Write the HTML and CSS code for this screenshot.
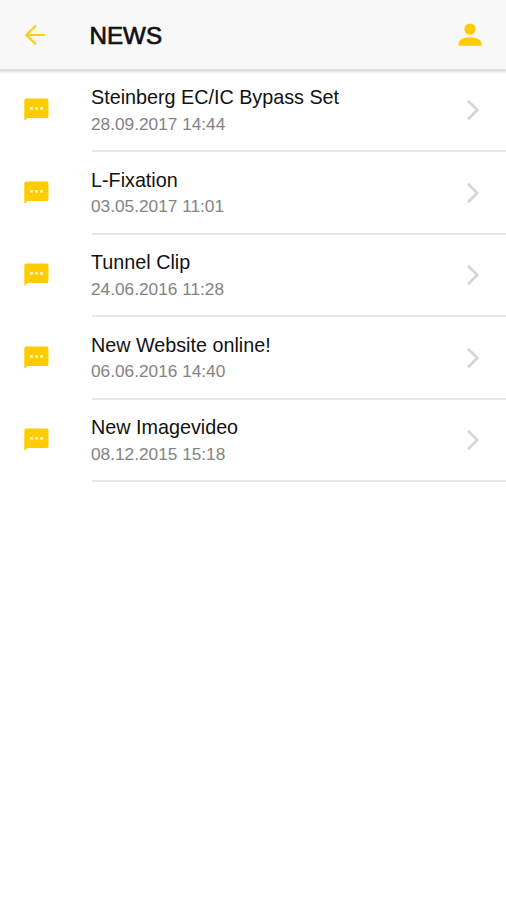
FILE: index.html
```html
<!DOCTYPE html>
<html lang="en">
<head>
<meta charset="utf-8">
<title>News</title>
<link rel="stylesheet" href="styles.css">
</head>
<body>
<svg width="0" height="0" class="symbols" aria-hidden="true">
  <symbol id="message" viewBox="0 0 25 24">
    <path fill="#fc0" d="M2 0.5H22.6Q24.5 0.5 24.5 2.4V18Q24.5 20 22.6 20H3.6L0.3 22.8V2.4Q0.3 0.5 2 0.5Z"/>
    <path fill="#fff3b8" d="M6 8.9h3v2.8H6zM11 8.9h3v2.8h-3zM16 8.9h3v2.8h-3z"/>
  </symbol>
  <symbol id="chevron" viewBox="0 0 14 22">
    <path fill="none" stroke="#d6d6d8" stroke-width="2.8" d="M2 1.8L11.2 11L2 20.2"/>
  </symbol>
</svg>
<header class="bar">
  <svg class="back" viewBox="0 0 22 22"><path d="M11.3 2.2L2.4 11L11.3 19.8M2.4 11H20"/></svg>
  <h1 class="title">NEWS</h1>
  <svg class="user" viewBox="0 0 24 24"><circle cx="12" cy="6.2" r="5.6"/><path d="M.6 22.8V20.2C.6 16.2 7 14.2 12 14.2S23.4 16.2 23.4 20.2V22.8Z"/></svg>
</header>
<main class="list">
  <article class="row"><svg class="message"><use href="#message"/></svg><div class="content"><div><h2 class="name">Steinberg EC/IC Bypass Set</h2><time class="date">28.09.2017 14:44</time></div><svg class="chevron"><use href="#chevron"/></svg></div></article>
  <article class="row"><svg class="message"><use href="#message"/></svg><div class="content"><div><h2 class="name">L-Fixation</h2><time class="date">03.05.2017 11:01</time></div><svg class="chevron"><use href="#chevron"/></svg></div></article>
  <article class="row"><svg class="message"><use href="#message"/></svg><div class="content"><div><h2 class="name">Tunnel Clip</h2><time class="date">24.06.2016 11:28</time></div><svg class="chevron"><use href="#chevron"/></svg></div></article>
  <article class="row"><svg class="message"><use href="#message"/></svg><div class="content"><div><h2 class="name">New Website online!</h2><time class="date">06.06.2016 14:40</time></div><svg class="chevron"><use href="#chevron"/></svg></div></article>
  <article class="row"><svg class="message"><use href="#message"/></svg><div class="content"><div><h2 class="name">New Imagevideo</h2><time class="date">08.12.2015 15:18</time></div><svg class="chevron"><use href="#chevron"/></svg></div></article>
</main>
</body>
</html>
```
FILE: styles.css
```css
* { box-sizing: border-box; }
body {
  margin: 0;
  min-height: 100vh;
  background: #fff;
  color: #111;
  font-family: "Liberation Sans", Arial, sans-serif;
}
.symbols { display: none; }
.bar {
  display: flex;
  align-items: center;
  height: 69px;
  padding: 1px 24px 0 24px;
  background: #f8f8f8;
  box-shadow: 0 2px 2px 1px #dedede;
}
.back {
  width: 22px;
  height: 22px;
  fill: none;
  stroke: #fc1;
  stroke-width: 2.2;
  stroke-linecap: round;
}
.title {
  flex: 1;
  margin: 1px 0 0 43.5px;
  font-size: 24.2px;
  font-weight: 400;
  line-height: 30px;
  -webkit-text-stroke: .7px #111;
}
.user { width: 24px; height: 24px; fill: #fc0; }
.list { padding-top: .5px; }
.row { display: flex; height: 82.5px; }
.message { flex: none; width: 25px; height: 24px; margin: 28.5px 43px 0 24px; }
.content {
  display: flex;
  flex: 1;
  justify-content: space-between;
  padding: 15.5px 26.5px 0 0;
  border-bottom: 2px solid #e8e8e8;
}
.name {
  margin: 0 0 0 -1px;
  font-size: 19.75px;
  font-weight: 400;
  line-height: 25px;
}
.date {
  display: block;
  margin: 1.5px 0 0 -1px;
  color: #838383;
  font-size: 17.25px;
  line-height: 24px;
}
.chevron { width: 14px; height: 22px; margin-top: 14px; }
```
